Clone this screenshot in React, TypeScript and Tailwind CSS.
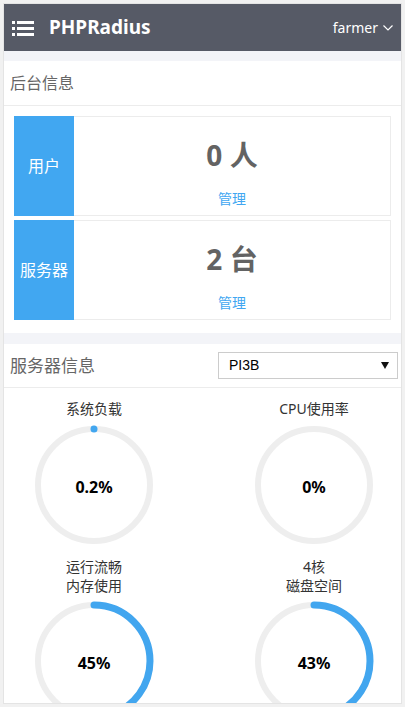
import type { JSX } from "react";

const font = { fontFamily: '"Segoe UI", "Noto Sans", "Noto Sans CJK SC", sans-serif' };

function ListIcon(): JSX.Element {
  return (
    <svg width="22" height="18" viewBox="0 0 22 18" className="text-white">
      {[2, 8, 14].map((y) => (
        <g key={y}>
          <rect x="0" y={y} width="3" height="3" fill="currentColor" />
          <rect x="5" y={y} width="17" height="3" fill="currentColor" />
        </g>
      ))}
    </svg>
  );
}

function Gauge({ value, text }: { value: number; text: string }): JSX.Element {
  const r = 56;
  const c = 2 * Math.PI * r;
  const len = Math.max(value, 0.0001) * c;
  return (
    <div className="relative h-[120px] w-[120px]">
      <svg width="120" height="120" viewBox="0 0 120 120">
        <circle cx="60" cy="60" r={r} fill="none" stroke="#eeeeee" strokeWidth="6" />
        {value >= 0 && (
          <circle
            cx="60"
            cy="60"
            r={r}
            fill="none"
            stroke="#42a6ef"
            strokeWidth="7"
            strokeLinecap="round"
            strokeDasharray={`${len} ${c}`}
            transform="rotate(-90 60 60)"
          />
        )}
      </svg>
      <div className="absolute inset-0 flex items-center justify-center pt-[3px] text-[16px] font-bold text-black">
        {text}
      </div>
    </div>
  );
}

function StatCard({ label, value }: { label: string; value: string }): JSX.Element {
  return (
    <div className="flex h-[100px] border border-[#ececec]">
      <div className="-my-px -ml-px flex w-[60px] items-center justify-center bg-[#41a7f1] text-[16px] text-white">
        {label}
      </div>
      <div className="flex flex-1 flex-col items-center">
        <div className="mt-[20px] text-[28px] font-bold leading-[36px] text-[#636363]">{value}</div>
        <a className="mt-[16px] text-[14px] leading-[20px] text-[#41a7f1]">管理</a>
      </div>
    </div>
  );
}

export default function App(): JSX.Element {
  const gauges = [
    { label: ["系统负载"], value: 0, text: "0.2%" },
    { label: ["CPU使用率"], value: 0, text: "0%", hide: true },
    { label: ["运行流畅", "内存使用"], value: 0.45, text: "45%" },
    { label: ["4核", "磁盘空间"], value: 0.43, text: "43%" },
  ];

  return (
    <div className="min-h-[707px] bg-[#f1f1f1] p-[3px]" style={font}>
      <div className="h-[701px] overflow-hidden border border-[#e4e4e4] bg-[#f3f4f8]">
        <header className="flex h-[47px] items-center bg-[#565a66] px-[8px] text-white">
          <ListIcon />
          <span className="ml-[15px] text-[19px] font-bold">PHPRadius</span>
          <span className="ml-auto text-[14px]">farmer</span>
          <svg width="10" height="6" viewBox="0 0 10 6" className="ml-[5px]">
            <path d="M0.5 0.5 L5 5 L9.5 0.5" fill="none" stroke="white" strokeWidth="1.2" />
          </svg>
        </header>

        <section className="mt-[10px] bg-white pb-[13px]">
          <div className="flex h-[45px] items-center border-b border-[#ececec] px-[6px] text-[16px] text-[#666]">
            后台信息
          </div>
          <div className="flex flex-col gap-[4px] px-[10px] pt-[10px]">
            <StatCard label="用户" value="0 人" />
            <StatCard label="服务器" value="2 台" />
          </div>
        </section>

        <section className="mt-[11px] h-[400px] bg-white">
          <div className="flex h-[44px] items-center border-b border-[#ececec] pl-[6px] pr-[3px]">
            <span className="text-[17px] text-[#666]">服务器信息</span>
            <div
              className="ml-auto flex h-[27px] w-[180px] items-center border border-[#cccccc] px-[10px] text-[14px] font-normal text-black"
              style={{ fontFamily: '"Liberation Sans", Arial, sans-serif' }}
            >
              PI3B
              <svg width="8" height="7" viewBox="0 0 8 7" className="ml-auto -mr-[2px]">
                <path d="M0 0 H8 L4 7 Z" fill="#111" />
              </svg>
            </div>
          </div>
          <div className="grid grid-cols-[160px_160px] gap-x-[60px] gap-y-[12px] pl-[10px] pt-[11px]">
            {gauges.map((g, i) => (
              <div key={i} className="flex flex-col items-center">
                <div className="text-center text-[14px] leading-[19px] text-[#333]">
                  {g.label.map((l) => (
                    <div key={l}>{l}</div>
                  ))}
                </div>
                <div className={g.label.length > 1 ? "mt-[6px]" : "mt-[7px]"}>
                  <Gauge value={g.hide ? -1 : g.value} text={g.text} />
                </div>
              </div>
            ))}
          </div>
        </section>
      </div>
    </div>
  );
}
